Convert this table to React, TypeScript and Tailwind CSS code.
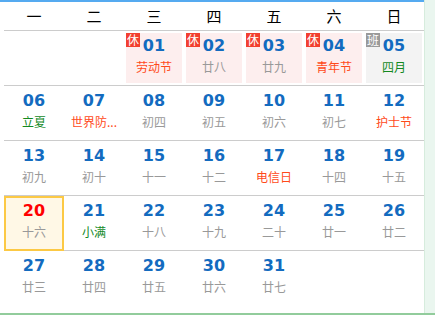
import React from "react";

type Day = {
  day: string;
  sub: string;
  tone?: "red" | "green";
  badge?: "休" | "班";
  today?: boolean;
};

const weekNames = ["一", "二", "三", "四", "五", "六", "日"];

const rows: (Day | null)[][] = [
  [
    null,
    null,
    { day: "01", sub: "劳动节", tone: "red", badge: "休" },
    { day: "02", sub: "廿八", badge: "休" },
    { day: "03", sub: "廿九", badge: "休" },
    { day: "04", sub: "青年节", tone: "red", badge: "休" },
    { day: "05", sub: "四月", tone: "green", badge: "班" },
  ],
  [
    { day: "06", sub: "立夏", tone: "green" },
    { day: "07", sub: "世界防...", tone: "red" },
    { day: "08", sub: "初四" },
    { day: "09", sub: "初五" },
    { day: "10", sub: "初六" },
    { day: "11", sub: "初七" },
    { day: "12", sub: "护士节", tone: "red" },
  ],
  [
    { day: "13", sub: "初九" },
    { day: "14", sub: "初十" },
    { day: "15", sub: "十一" },
    { day: "16", sub: "十二" },
    { day: "17", sub: "电信日", tone: "red" },
    { day: "18", sub: "十四" },
    { day: "19", sub: "十五" },
  ],
  [
    { day: "20", sub: "十六", today: true },
    { day: "21", sub: "小满", tone: "green" },
    { day: "22", sub: "十八" },
    { day: "23", sub: "十九" },
    { day: "24", sub: "二十" },
    { day: "25", sub: "廿一" },
    { day: "26", sub: "廿二" },
  ],
  [
    { day: "27", sub: "廿三" },
    { day: "28", sub: "廿四" },
    { day: "29", sub: "廿五" },
    { day: "30", sub: "廿六" },
    { day: "31", sub: "廿七" },
    null,
    null,
  ],
];

const cjk = "font-['Noto_Sans_CJK_SC','Noto_Sans',sans-serif]";

const DayCell: React.FC<{ d: Day | null }> = ({ d }) => {
  if (!d) return <div className="h-[54px]" />;

  const subColor =
    d.tone === "red"
      ? "text-[#ff4a1a]"
      : d.tone === "green"
      ? "text-[#13891f]"
      : "text-[#999999]";

  let box = "h-full";
  if (d.today) box = "h-[55px] border-2 border-[#fcc944] bg-[#fff8e6]";
  else if (d.badge === "休") box = "m-[2px] h-[50px] bg-[#fdeeee]";
  else if (d.badge === "班") box = "m-[2px] h-[50px] bg-[#f3f3f3]";

  return (
    <div className="h-[54px]">
      <div className={`relative flex flex-col items-center ${box}`}>
        {d.badge && (
          <span
            className={`absolute left-0 top-0 flex h-[14px] w-[14px] items-center justify-center text-[12px] leading-none text-white ${cjk} ${
              d.badge === "休" ? "bg-[#f2402f]" : "bg-[#9a9a9a]"
            }`}
          >
            {d.badge}
          </span>
        )}
        <span
          className={`font-['DejaVu_Sans',sans-serif] text-[16px] font-bold leading-none ${
            d.today ? "mt-[5px] text-[#ff0000]" : d.badge ? "mt-[5px] text-[#136bbf]" : "mt-[7px] text-[#136bbf]"
          }`}
        >
          {d.day}
        </span>
        <span className={`mt-[5px] text-[12px] leading-[16px] ${cjk} ${subColor}`}>
          {d.sub}
        </span>
      </div>
    </div>
  );
};

export default function App() {
  return (
    <div className="flex h-[315px] w-[435px] flex-col overflow-hidden bg-white">
      <div className="flex flex-1">
        <div className="w-[424px] border-t-2 border-[#55aaf0] pl-1">
          <div className={`grid h-[29px] grid-cols-7 items-center border-b border-[#cccccc] text-[15px] text-black ${cjk}`}>
            {weekNames.map((w) => (
              <div key={w} className="text-center">
                {w}
              </div>
            ))}
          </div>
          {rows.map((row, i) => (
            <div
              key={i}
              className={`grid grid-cols-7 ${i < rows.length - 1 ? "border-b border-[#cccccc]" : ""}`}
            >
              {row.map((d, j) => (
                <DayCell key={j} d={d} />
              ))}
            </div>
          ))}
        </div>
        <div className="flex-1 border-l border-[#d6ecdd] bg-[#eaf6ef]" />
      </div>
      <div className="h-[2px] bg-[#92cc9c]" />
    </div>
  );
}
